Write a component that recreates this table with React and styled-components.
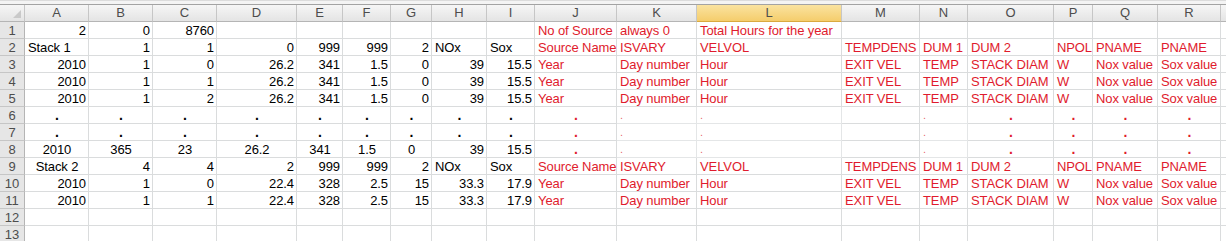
import React from "react";
import styled, { createGlobalStyle, css } from "styled-components";

const Global = createGlobalStyle`
  html, body { margin: 0; padding: 0; background: #ffffff; }
  body { font-family: "Liberation Sans", Arial, sans-serif; }
`;

const COLS = [
  ["A", 64], ["B", 64], ["C", 64], ["D", 80], ["E", 46], ["F", 48], ["G", 41],
  ["H", 55], ["I", 48], ["J", 82], ["K", 80], ["L", 145], ["M", 78], ["N", 48],
  ["O", 86], ["P", 39], ["Q", 65], ["R", 63],
];
const template = `25px ${COLS.map((c) => c[1] + "px").join(" ")} 1fr`;

const RED = "#e01b2d";

const Sheet = styled.div`
  width: 1226px;
  height: 241px;
  overflow: hidden;
  background: #fff;
`;

const TopStrip = styled.div`
  height: 5px;
  box-sizing: border-box;
  border-top: 1px solid #dcdcdc;
  border-bottom: 1px solid #a3a3a3;
  background: #f4f4f4;
`;

const Grid = styled.div`
  display: grid;
  grid-template-columns: ${template};
  grid-auto-rows: 17px;
`;

const ColHead = styled.div`
  box-sizing: border-box;
  border-right: 1px solid #c6c6c6;
  border-bottom: 1px solid #b5b5b5;
  background: ${(p) =>
    p.$active
      ? "linear-gradient(#fae3a0, #f5cd6c)"
      : "linear-gradient(#f6f6f6, #e4e4e4)"};
  border-bottom-color: ${(p) => (p.$active ? "#d9a93f" : "#b5b5b5")};
  color: #4d4d4d;
  font-size: 13px;
  line-height: 16px;
  text-align: center;
`;

const Corner = styled(ColHead)`
  position: relative;
  &::after {
    content: "";
    position: absolute;
    right: 3px;
    bottom: 3px;
    width: 0;
    height: 0;
    border-left: 8px solid transparent;
    border-bottom: 8px solid #c9c9c9;
  }
`;

const Filler = styled.div`
  box-sizing: border-box;
  border-bottom: 1px solid #b5b5b5;
  background: linear-gradient(#f6f6f6, #e4e4e4);
`;

const RowHead = styled.div`
  box-sizing: border-box;
  border-right: 1px solid #b5b5b5;
  border-bottom: 1px solid #c6c6c6;
  background: #e6e6e6;
  color: #4d4d4d;
  font-size: 13px;
  line-height: 17px;
  text-align: center;
`;

const Cell = styled.div`
  box-sizing: border-box;
  border-right: 1px solid #dadcdd;
  border-bottom: 1px solid #dadcdd;
  padding: 0 2px 0 3px;
  font-size: 13px;
  letter-spacing: -0.1px;
  line-height: 17px;
  white-space: nowrap;
  overflow: visible;
  color: ${(p) => (p.$red ? RED : "#000")};
  text-align: ${(p) =>
    p.$align === "r" ? "right" : p.$align === "c" ? "center" : "left"};
  ${(p) =>
    p.$dot &&
    css`
      font-weight: bold;
      font-size: 14px;
    `}
  ${(p) =>
    p.$thin &&
    css`
      font-size: 11px;
      color: ${RED};
      opacity: 0.7;
    `}
`;

const EmptyEnd = styled.div`
  box-sizing: border-box;
  border-bottom: 1px solid #dadcdd;
`;

// helpers
const r = (v) => ({ v, a: "r" });
const l = (v) => ({ v, a: "l" });
const c = (v) => ({ v, a: "c" });
const R = (v) => ({ v, a: "l", red: true });
const dot = (red) => ({ v: ".", a: "c", dot: true, red });
const thin = () => ({ v: ".", a: "l", thin: true });
const E = null;

const redHeader = [R("Source Name"), R("ISVARY"), R("VELVOL"), R("TEMPDENS"), R("DUM 1"), R("DUM 2"), R("NPOL"), R("PNAME"), R("PNAME")];
const redData = [R("Year"), R("Day number"), R("Hour"), R("EXIT VEL"), R("TEMP"), R("STACK DIAM"), R("W"), R("Nox value"), R("Sox value")];
const dotRow = [dot(), dot(), dot(), dot(), dot(), dot(), dot(), dot(), dot(), dot(true), thin(), thin(), E, thin(), dot(true), dot(true), dot(true), dot(true)];

const ROWS = [
  [r(2), r(0), r(8760), E, E, E, E, E, E, R("No of Source"), R("always 0"), R("Total Hours for the year"), E, E, E, E, E, E],
  [l("Stack 1"), r(1), r(1), r(0), r(999), r(999), r(2), l("NOx"), l("Sox"), ...redHeader],
  [r(2010), r(1), r(0), r(26.2), r(341), r(1.5), r(0), r(39), r(15.5), ...redData],
  [r(2010), r(1), r(1), r(26.2), r(341), r(1.5), r(0), r(39), r(15.5), ...redData],
  [r(2010), r(1), r(2), r(26.2), r(341), r(1.5), r(0), r(39), r(15.5), ...redData],
  dotRow,
  dotRow,
  [c(2010), c(365), c(23), c(26.2), c(341), c(1.5), c(0), r(39), r(15.5), dot(true), thin(), thin(), E, thin(), dot(true), dot(true), dot(true), dot(true)],
  [c("Stack 2"), r(4), r(4), r(2), r(999), r(999), r(2), l("NOx"), l("Sox"), ...redHeader],
  [r(2010), r(1), r(0), r(22.4), r(328), r(2.5), r(15), r(33.3), r(17.9), ...redData],
  [r(2010), r(1), r(1), r(22.4), r(328), r(2.5), r(15), r(33.3), r(17.9), ...redData],
  Array(18).fill(E),
  Array(18).fill(E),
];

export default function App() {
  return (
    <Sheet>
      <Global />
      <TopStrip />
      <Grid>
        <Corner />
        {COLS.map(([name]) => (
          <ColHead key={name} $active={name === "L"}>
            {name}
          </ColHead>
        ))}
        <Filler />
        {ROWS.map((row, i) => (
          <React.Fragment key={i}>
            <RowHead>{i + 1}</RowHead>
            {row.map((cell, j) =>
              cell ? (
                <Cell
                  key={j}
                  $align={cell.a}
                  $red={cell.red}
                  $dot={cell.dot}
                  $thin={cell.thin}
                >
                  {cell.v}
                </Cell>
              ) : (
                <Cell key={j} />
              )
            )}
            <EmptyEnd />
          </React.Fragment>
        ))}
      </Grid>
    </Sheet>
  );
}
